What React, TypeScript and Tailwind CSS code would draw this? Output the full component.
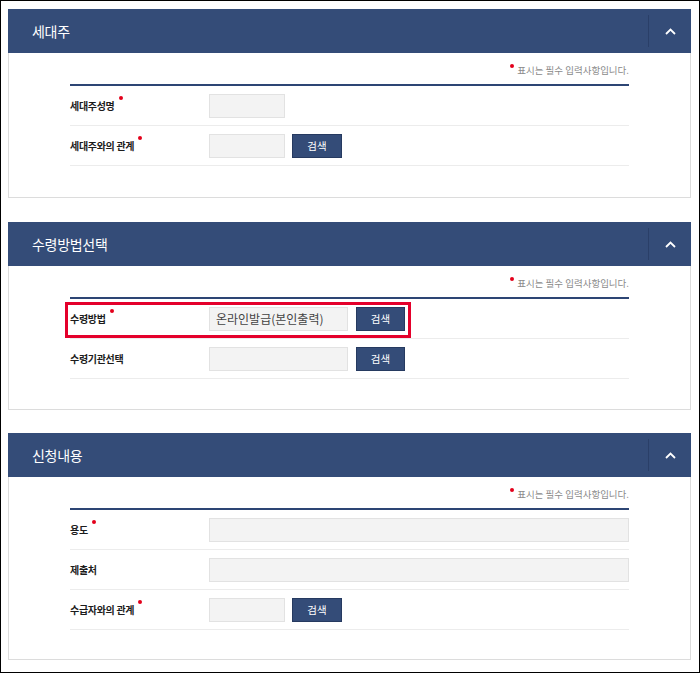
import React, { FC } from "react";

const font = { fontFamily: '"Noto Sans CJK KR", "Noto Sans", sans-serif' };

type Row = {
  label: string;
  required?: boolean;
  input: "short" | "mid" | "full";
  value?: string;
  button?: boolean;
  highlight?: boolean;
};

const Dot: FC<{ className?: string }> = ({ className = "" }) => (
  <span className={`inline-block w-[4px] h-[4px] rounded-full bg-[#e3001b] ${className}`} />
);

const FormRow: FC<{ row: Row }> = ({ row }) => {
  const inputWidth =
    row.input === "short" ? "w-[76px]" : row.input === "mid" ? "w-[139px]" : "flex-1";
  return (
    <div className="relative flex items-center h-[40px] border-b border-[#ececec]">
      <div className="w-[139px] flex items-center text-[10px] font-bold text-[#1c1c1c] tracking-[-0.3px]">
        {row.label}
        {row.required && <Dot className="ml-[4px] relative -top-[8px]" />}
      </div>
      <div
        className={`${inputWidth} h-[24px] bg-[#f3f3f3] border border-[#e2e2e2] flex items-center pl-[6px] text-[12px] text-[#444]`}
      >
        {row.value}
      </div>
      {row.button && (
        <button
          className={`${row.input === "mid" ? "ml-[8px] w-[49px]" : "ml-[7px] w-[50px]"} h-[24px] bg-[#344c78] border border-[#263a60] text-white text-[10.5px]`}
        >
          검색
        </button>
      )}
      {row.highlight && (
        <div className="absolute left-[-5px] top-[3px] w-[346px] h-[36px] border-[3px] border-[#e4002b]" />
      )}
    </div>
  );
};

const Panel: FC<{ title: string; rows: Row[]; wrap: string; body: string }> = ({
  title,
  rows,
  wrap,
  body,
}) => {
  return (
    <div className={wrap}>
      <div className="h-[44px] bg-[#344c78] flex items-center justify-between">
        <div className="pl-[24px] text-white text-[14px] tracking-[-0.3px]">{title}</div>
        <div className="flex items-center h-full">
          <div className="w-px h-[32px] bg-[#2a3f68]" />
          <div className="w-[42px] h-full flex items-center justify-center">
            <svg width="11" height="7" viewBox="0 0 11 7">
              <polyline points="1,6 5.5,1.5 10,6" fill="none" stroke="#ffffff" strokeWidth="1.8" />
            </svg>
          </div>
        </div>
      </div>
      <div className={`border-x border-b border-[#dcdcdc] px-[61px] pt-[10px] ${body}`}>
        <div className="flex justify-end items-start h-[14px] text-[9.5px] leading-[14px] text-[#8a8a8a]">
          <Dot className="mr-[3px] mt-[1px]" />
          표시는 필수 입력사항입니다.
        </div>
        <div className="mt-[7px] h-[2px] bg-[#2d4574]" />
        {rows.map((r) => (
          <FormRow key={r.label} row={r} />
        ))}
      </div>
    </div>
  );
};

const App: FC = () => {
  return (
    <div
      className="w-[700px] h-[673px] border border-black bg-white pl-[7px] pr-[8px] pt-[8px] overflow-hidden"
      style={font}
    >
      <Panel
        title="세대주"
        wrap="mb-[24px]"
        body="pb-[31px]"
        rows={[
          { label: "세대주성명", required: true, input: "short" },
          { label: "세대주와의 관계", required: true, input: "short", button: true },
        ]}
      />
      <Panel
        title="수령방법선택"
        wrap="mb-[23px]"
        body="pb-[30px]"
        rows={[
          {
            label: "수령방법",
            required: true,
            input: "mid",
            value: "온라인발급(본인출력)",
            button: true,
            highlight: true,
          },
          { label: "수령기관선택", input: "mid", button: true },
        ]}
      />
      <Panel
        title="신청내용"
        wrap=""
        body="pb-[29px]"
        rows={[
          { label: "용도", required: true, input: "full" },
          { label: "제출처", input: "full" },
          { label: "수급자와의 관계", required: true, input: "short", button: true },
        ]}
      />
    </div>
  );
};

export default App;
